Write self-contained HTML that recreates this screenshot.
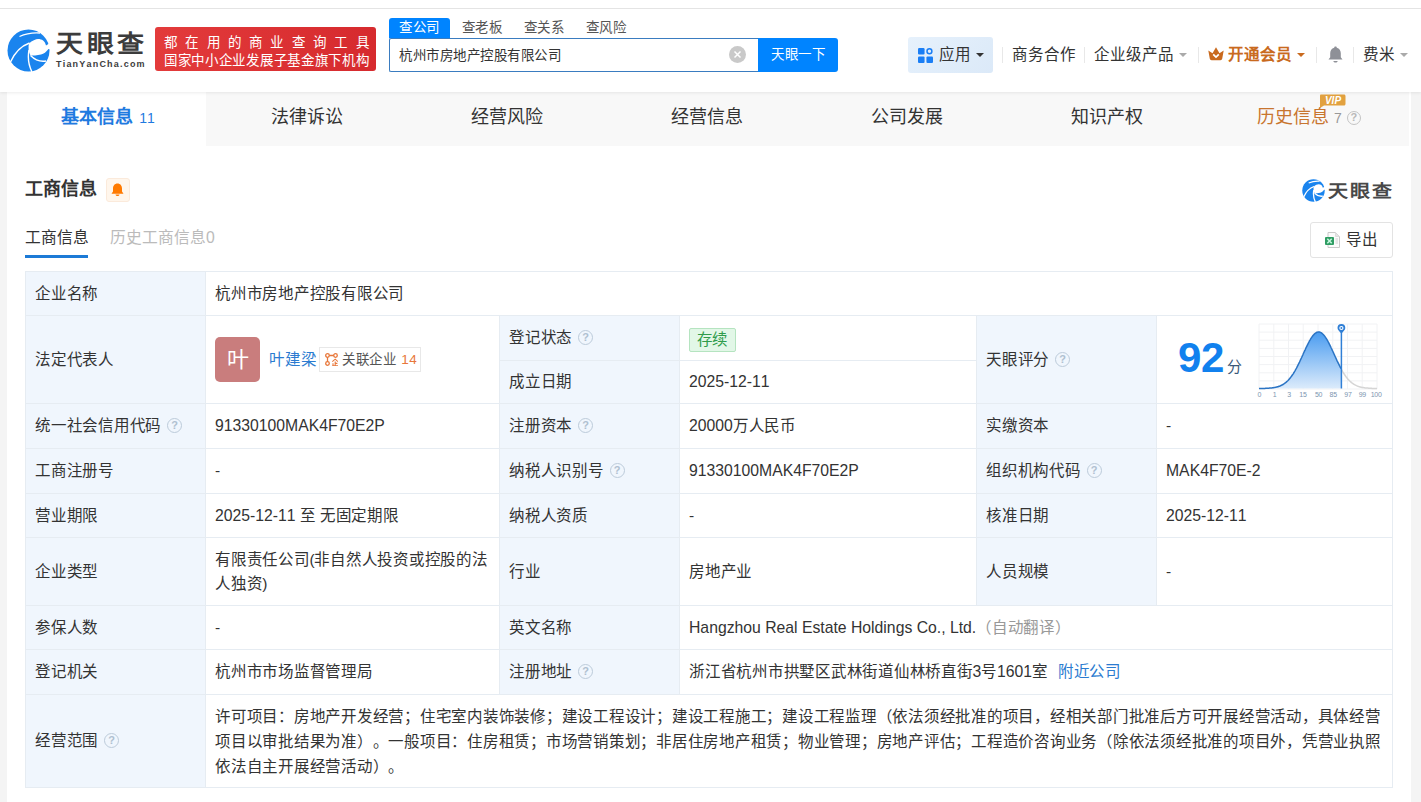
<!DOCTYPE html>
<html lang="zh-CN"><head><meta charset="utf-8">
<style>
*{margin:0;padding:0;box-sizing:border-box}
html,body{text-spacing-trim:space-all;font-kerning:none;width:1421px;height:802px;overflow:hidden;background:#f4f4f4;font-family:"Liberation Sans",sans-serif;color:#333}
.abs{position:absolute}
#hdr{position:absolute;left:0;top:0;width:1421px;height:92px;background:#fff;box-shadow:0 1px 3px rgba(0,0,0,.08);z-index:2}
#topline{position:absolute;left:0;top:8px;width:1421px;height:1px;background:#e4e4e4}
.logoTxt{transform:scaleY(0.9);transform-origin:0 27px;position:absolute;left:56px;top:26px;font-size:27px;font-weight:bold;color:#3c3c3c;letter-spacing:3.5px;line-height:34px;white-space:nowrap}
.logoSub{position:absolute;left:56px;top:58px;font-size:9px;font-weight:bold;color:#3c3c3c;letter-spacing:1.2px;line-height:12px;white-space:nowrap}
.banner{position:absolute;left:155px;top:27px;width:221px;height:44px;border-radius:3px;background:linear-gradient(90deg,#e33b3b,#d62a2e);color:#fff}
.b1{position:absolute;left:9px;top:7px;font-size:13.5px;letter-spacing:8.3px;line-height:18px;white-space:nowrap}
.b2{position:absolute;left:9px;top:25px;font-size:13.5px;letter-spacing:0.7px;line-height:18px;white-space:nowrap}
.stab{position:absolute;top:18px;height:20px;width:62px;font-size:13.5px;letter-spacing:0.5px;line-height:20px;text-align:center;color:#555;white-space:nowrap}
.stab.on{background:#0084ff;color:#fff;border-radius:3px 3px 0 0;width:61px}
.sinput{position:absolute;left:389px;top:38px;width:369px;height:34px;border:1px solid #3a7cc0;border-right:none;border-radius:2px 0 0 2px;background:#fff}
.sinput .t{position:absolute;left:9px;top:8px;letter-spacing:0.5px;font-size:13.5px;line-height:18px;color:#333;white-space:nowrap}
.clr{position:absolute;left:339px;top:7px;width:17px;height:17px;border-radius:50%;background:#c9c9c9}
.sbtn{position:absolute;left:758px;top:38px;width:80px;height:34px;background:#0084ff;border-radius:0 3px 3px 0;color:#fff;font-size:13.5px;letter-spacing:0.5px;padding-left:0px;line-height:34px;text-align:center;white-space:nowrap}
.nav{position:absolute;top:46px;font-size:15.5px;line-height:18px;color:#333;white-space:nowrap}
.sep{position:absolute;top:47px;width:1px;height:16px;background:#e8e8e8}
.caret{position:absolute;width:0;height:0;border-left:4px solid transparent;border-right:4px solid transparent;border-top:4px solid #999}
#card{position:absolute;left:7px;top:92px;width:1404px;height:710px;background:#fff}
#tabs{position:absolute;left:0;top:0;width:1402px;height:54px;background:#f8f8f8}
.tab{position:absolute;top:0;width:200px;height:54px;text-align:center;font-size:18px;line-height:50px;color:#333;white-space:nowrap}
.tab.on{background:#fff;color:#1f7ae0;font-weight:bold;left:0;width:199px}
.c{position:absolute;border-right:1px solid #e6ecf2;border-bottom:1px solid #e6ecf2;background:#fff;display:flex;align-items:center;font-size:15.5px;letter-spacing:-0.25px;color:#333;white-space:nowrap}
.en{letter-spacing:0;font-size:15.75px}
.c.lb{background:#f0f6fd}
.c .in{padding-left:9px;position:relative;top:0px;line-height:20px}
.c .in.fx{display:flex;align-items:center;top:0}
.q{display:inline-block;vertical-align:2px;width:15px;height:15px;border:1.5px solid #bccbda;border-radius:50%;color:#afc0d0;font-size:11px;line-height:12px;text-align:center;margin-left:6px;font-weight:bold;letter-spacing:0}
.ml{white-space:nowrap}
.av{display:inline-block;width:45px;height:45px;border-radius:5px;background:#c97d7d;color:#fff;font-size:22px;line-height:45px;text-align:center;margin-right:9px}
.lk{color:#2b7bd0}
.rel{display:inline-flex;align-items:center;height:25px;border:1px solid #e8e8e8;margin-left:3px;padding:0 3px 0 5px;font-size:13.5px;letter-spacing:0.5px}
.rel svg{margin-right:4px}
.rt{color:#555}
.rn{color:#e8773a;margin-left:5px}
.tag{display:inline-block;vertical-align:middle;position:relative;top:2px;height:24px;line-height:22px;border:1px solid #b5e4c0;background:#e2f7e7;color:#2f9c4b;border-radius:2px;padding:0 6.5px;font-size:15.5px}
.gr{color:#999;margin-left:0px}
.sc{position:absolute;left:21px;top:19px;font-size:42px;font-weight:bold;color:#1181ee;line-height:46px;font-family:"Liberation Sans",sans-serif}
.fen{position:absolute;left:70px;top:42px;font-size:15px;color:#3a5878;line-height:18px}
.chart{position:absolute;left:0;top:0}
</style></head><body>
<div id="hdr">
  <div id="topline"></div>
  <svg class="abs" style="left:7px;top:29px" width="43" height="43" viewBox="0 0 43 43">
<circle cx="21.5" cy="21.5" r="21" fill="#1a84ee"/>
  <path d="M22 14.5 C25 11.5, 29 10, 31 10 C35 10, 38 12, 39 16.5 L43 14 L43 20 L41.5 20 C39 23, 37 25, 34 25.5 C30 26.5, 26 26.5, 23.5 26.5 C21.5 23, 21 18, 22 14.5 Z" fill="#fff"/>
  <path d="M12.5 7.5 C19 4.5, 26 3.5, 33 4" fill="none" stroke="#fff" stroke-width="1.3"/>
  <path d="M3.5 33 C8 23, 14 17, 22.5 14" fill="none" stroke="#fff" stroke-width="1.4"/>
  <path d="M22 21 C20.5 29, 21.5 36, 25 43" fill="none" stroke="#fff" stroke-width="1.4"/>
  <path d="M23.5 26.5 C28 31, 33 33, 39 32" fill="none" stroke="#fff" stroke-width="1.4"/>
  </svg>
  <div class="logoTxt">天眼查</div>
  <div class="logoSub">TianYanCha.com</div>
  <div class="banner"><div class="b1">都在用的商业查询工具</div><div class="b2">国家中小企业发展子基金旗下机构</div></div>
  <div class="stab on" style="left:389px">查公司</div>
  <div class="stab" style="left:451px">查老板</div>
  <div class="stab" style="left:513px">查关系</div>
  <div class="stab" style="left:575px">查风险</div>
  <div class="sinput"><div class="t">杭州市房地产控股有限公司</div>
    <div class="clr"><svg width="17" height="17" viewBox="0 0 17 17"><path d="M5.5 5.5l6 6M11.5 5.5l-6 6" stroke="#fff" stroke-width="1.5"/></svg></div>
  </div>
  <div class="sbtn">天眼一下</div>
  <div class="abs" style="left:908px;top:37px;width:85px;height:36px;border-radius:3px;background:linear-gradient(135deg,#e6f1fc,#dbe9f8)"></div>
  <svg class="abs" style="left:918px;top:47.5px" width="15" height="15" viewBox="0 0 16 16">
    <rect x="0" y="0" width="7" height="7" rx="1.2" fill="#1a7ef5"/>
    <circle cx="12.2" cy="3.5" r="2.6" fill="none" stroke="#1a7ef5" stroke-width="1.6"/>
    <rect x="0" y="9" width="7" height="7" rx="1.2" fill="#1a7ef5"/>
    <rect x="9" y="9" width="7" height="7" rx="1.2" fill="#1a7ef5"/>
  </svg>
  <div class="nav" style="left:939px">应用</div>
  <div class="caret" style="left:976px;top:53px;border-top-color:#333"></div>
  <div class="sep" style="left:1002px"></div>
  <div class="nav" style="left:1012px">商务合作</div>
  <div class="sep" style="left:1084px"></div>
  <div class="nav" style="left:1094px">企业级产品</div>
  <div class="caret" style="left:1179px;top:53px;border-top-color:#aaa"></div>
  <div class="sep" style="left:1198px"></div>
  <svg class="abs" style="left:1208px;top:47px" width="16" height="14" viewBox="0 0 16 14">
    <path d="M0.3 3.5 L4.5 6.2 L8 0.3 L11.5 6.2 L15.7 3.5 L14.2 11.8 Q13.9 13.2 12.5 13.2 L3.5 13.2 Q2.1 13.2 1.8 11.8 Z" fill="#c96a1e"/>
    <path d="M5.2 7.3 L8 10.1 L10.8 7.3" fill="none" stroke="#fff" stroke-width="1.7"/>
  </svg>
  <div class="nav" style="left:1228px;color:#c96a1e;font-weight:bold">开通会员</div>
  <div class="caret" style="left:1297px;top:53px;border-top-color:#c96a1e"></div>
  <div class="sep" style="left:1316px"></div>
  <svg class="abs" style="left:1328px;top:46px" width="15" height="17" viewBox="0 0 15 17">
    <path d="M7.5 0.5c.8 0 1.3.5 1.3 1.2 2.6.6 4 2.8 4 5.6v4l1.7 2.2H0.5l1.7-2.2v-4c0-2.8 1.4-5 4-5.6 0-.7.5-1.2 1.3-1.2z" fill="#8e9097"/>
    <path d="M5.3 15h4.4c-.3 1-1.2 1.6-2.2 1.6S5.6 16 5.3 15z" fill="#8e9097"/>
  </svg>
  <div class="sep" style="left:1353px"></div>
  <div class="nav" style="left:1363px">费米</div>
  <div class="caret" style="left:1400px;top:53px;border-top-color:#aaa"></div>
</div>

<div id="card">
  <div id="tabs">
    <div class="tab on" style="padding-left:3px">基本信息<span style="font-size:14px;font-weight:normal;margin-left:6px">11</span></div>
    <div class="tab" style="left:200px">法律诉讼</div>
    <div class="tab" style="left:400px">经营风险</div>
    <div class="tab" style="left:600px">经营信息</div>
    <div class="tab" style="left:800px">公司发展</div>
    <div class="tab" style="left:1000px">知识产权</div>
    <div class="tab" style="left:1202px;color:#c8752f">历史信息<span style="font-size:14px;color:#999;margin-left:5px">7</span><span class="q" style="margin-left:5px;vertical-align:2px;width:14px;height:14px;line-height:11px;border-color:#c4c4c4;color:#b8b8b8">?</span></div>
    <svg class="abs" style="left:1312px;top:2px" width="27" height="14" viewBox="0 0 27 14">
      <path d="M2 0.5h23c.8 0 1.5.7 1.5 1.5v8c0 .8-.7 1.5-1.5 1.5H5L1 14V2C1 1.2 1.2 0.5 2 0.5z" fill="#e2a13f"/>
      <text x="14" y="10" text-anchor="middle" font-size="10" font-weight="bold" font-style="italic" fill="#fff" font-family="Liberation Sans, sans-serif">VIP</text>
    </svg>
  </div>
</div>

<div class="abs" style="left:25px;top:177px;font-size:18px;font-weight:bold;color:#333;line-height:24px;white-space:nowrap">工商信息</div>
<div class="abs" style="left:106px;top:178px;width:24px;height:24px;background:#fff6ec;border:1px solid #fbeadb;border-radius:3px"></div>
<svg class="abs" style="left:111px;top:183px" width="13" height="14" viewBox="0 0 13 14">
  <path d="M6.5 0.5c2.8 0 4.5 2.2 4.5 5v3l1.5 2.3H0.5L2 8.5v-3c0-2.8 1.7-5 4.5-5z" fill="#ff7a00"/>
  <path d="M4.5 11.5h4c-.3 1-1 1.6-2 1.6s-1.7-.6-2-1.6z" fill="#ff7a00"/>
</svg>
<svg class="abs" style="left:1302px;top:179px" width="23" height="23" viewBox="0 0 43 43">
<circle cx="21.5" cy="21.5" r="21" fill="#1a84ee"/>
  <path d="M22 14.5 C25 11.5, 29 10, 31 10 C35 10, 38 12, 39 16.5 L43 14 L43 20 L41.5 20 C39 23, 37 25, 34 25.5 C30 26.5, 26 26.5, 23.5 26.5 C21.5 23, 21 18, 22 14.5 Z" fill="#fff"/>
  <path d="M12.5 7.5 C19 4.5, 26 3.5, 33 4" fill="none" stroke="#fff" stroke-width="2.4"/>
  <path d="M3.5 33 C8 23, 14 17, 22.5 14" fill="none" stroke="#fff" stroke-width="2.4"/>
  <path d="M22 21 C20.5 29, 21.5 36, 25 43" fill="none" stroke="#fff" stroke-width="2.4"/>
  <path d="M23.5 26.5 C28 31, 33 33, 39 32" fill="none" stroke="#fff" stroke-width="2.4"/>
</svg>
<div class="abs" style="left:1328px;top:178px;font-size:20px;letter-spacing:2px;font-weight:bold;color:#484848;line-height:24px;white-space:nowrap;transform:scaleY(0.88);transform-origin:0 21px">天眼查</div>

<div class="abs" style="left:25px;top:228px;font-size:15.75px;color:#333;line-height:20px;white-space:nowrap">工商信息</div>
<div class="abs" style="left:25px;top:255px;width:63px;height:3px;background:#1c7ad6"></div>
<div class="abs" style="left:110px;top:228px;font-size:15.75px;color:#bbb;line-height:20px;white-space:nowrap">历史工商信息0</div>

<div class="abs" style="left:1310px;top:222px;width:83px;height:36px;border:1px solid #e3e3e3;border-radius:3px;background:#fff"></div>
<svg class="abs" style="left:1325px;top:232px" width="15" height="16" viewBox="0 0 15 16">
  <path d="M3 0.5h7.5l4 4v11H3z" fill="#fbfbfb" stroke="#c9c9c9" stroke-width="1"/>
  <path d="M10.5 0.5v4h4" fill="#e5e5e5" stroke="#dcdcdc" stroke-width="1"/>
  <rect x="0" y="5" width="9" height="8" rx="1" fill="#2f9d63"/>
  <path d="M2.3 6.8l4.4 4.4M6.7 6.8l-4.4 4.4" stroke="#c8f7e0" stroke-width="1.5"/>
  <path d="M10.5 7h2.5M10.5 9h2.5M10.5 11h2.5" stroke="#cfcfcf" stroke-width="1"/>
</svg>
<div class="abs" style="left:1346px;top:230px;font-size:15.5px;color:#333;line-height:20px;white-space:nowrap">导出</div>

<div class="abs" style="left:25px;top:271px;width:1368px;height:517px;border-left:1px solid #e6ecf2;border-top:1px solid #e6ecf2"></div>
<div class="c lb" style="left:26px;top:272px;width:180px;height:44px;"><div class="in">企业名称</div></div>
<div class="c" style="left:206px;top:272px;width:1187px;height:44px;"><div class="in">杭州市房地产控股有限公司</div></div>
<div class="c lb" style="left:26px;top:316px;width:180px;height:88px;"><div class="in">法定代表人</div></div>
<div class="c" style="left:206px;top:316px;width:294px;height:88px;"><div class="in fx"><span class="av">叶</span><span class="lk">叶建梁</span><span class="rel"><svg width="13" height="13" viewBox="0 0 13 13" fill="none" stroke="#e8773a" stroke-width="1.3"><circle cx="2.5" cy="2.5" r="1.8"/><circle cx="10.5" cy="2.5" r="1.8"/><circle cx="2.5" cy="10.5" r="1.8"/><path d="M4.3 2.5h4.4M2.5 4.3v4.4"/><path d="M7.3 8.6L10.2 6.2L13 8.6M10.2 8.5v4.3M8 10.2v2.6M7.2 12.8h6M10.2 10.4h2.2" stroke-width="1.1"/></svg><span class="rt">关联企业</span><span class="rn">14</span></span></div></div>
<div class="c lb" style="left:500px;top:316px;width:180px;height:45px;"><div class="in">登记状态<span class="q">?</span></div></div>
<div class="c" style="left:680px;top:316px;width:297px;height:45px;"><div class="in"><span class="tag">存续</span></div></div>
<div class="c lb" style="left:500px;top:361px;width:180px;height:43px;"><div class="in">成立日期</div></div>
<div class="c" style="left:680px;top:361px;width:297px;height:43px;"><div class="in"><span class="en">2025-12-11</span></div></div>
<div class="c lb" style="left:977px;top:316px;width:180px;height:88px;"><div class="in">天眼评分<span class="q">?</span></div></div>
<div class="c" style="left:1157px;top:316px;width:236px;height:88px;"><span class="sc">92</span><span class="fen">分</span><svg class="chart" width="236" height="88" viewBox="0 0 236 88">
<defs><linearGradient id="g1" x1="0" y1="0" x2="0" y2="1"><stop offset="0" stop-color="#4a9cf0"/><stop offset="1" stop-color="#dcebfb"/></linearGradient></defs>
<g stroke="#f1f2f4" stroke-width="1"><line x1="102.0" y1="8" x2="102.0" y2="73"/><line x1="116.8" y1="8" x2="116.8" y2="73"/><line x1="131.5" y1="8" x2="131.5" y2="73"/><line x1="146.2" y1="8" x2="146.2" y2="73"/><line x1="161.0" y1="8" x2="161.0" y2="73"/><line x1="175.8" y1="8" x2="175.8" y2="73"/><line x1="190.5" y1="8" x2="190.5" y2="73"/><line x1="205.2" y1="8" x2="205.2" y2="73"/><line x1="220.0" y1="8" x2="220.0" y2="73"/><line x1="102" y1="8.0" x2="220" y2="8.0"/><line x1="102" y1="16.1" x2="220" y2="16.1"/><line x1="102" y1="24.2" x2="220" y2="24.2"/><line x1="102" y1="32.4" x2="220" y2="32.4"/><line x1="102" y1="40.5" x2="220" y2="40.5"/><line x1="102" y1="48.6" x2="220" y2="48.6"/><line x1="102" y1="56.8" x2="220" y2="56.8"/><line x1="102" y1="64.9" x2="220" y2="64.9"/><line x1="102" y1="73.0" x2="220" y2="73.0"/></g>
<path d="M102.0 72.5 L102.5 72.5 L103.0 72.5 L103.5 72.4 L104.0 72.4 L104.5 72.4 L105.0 72.4 L105.5 72.4 L106.0 72.4 L106.5 72.4 L107.0 72.4 L107.5 72.4 L108.0 72.4 L108.5 72.3 L109.0 72.3 L109.5 72.3 L110.0 72.3 L110.5 72.3 L111.0 72.2 L111.5 72.2 L112.0 72.2 L112.5 72.1 L113.0 72.1 L113.5 72.0 L114.0 72.0 L114.5 71.9 L115.0 71.9 L115.5 71.8 L116.0 71.8 L116.5 71.7 L117.0 71.6 L117.5 71.5 L118.0 71.4 L118.5 71.3 L119.0 71.2 L119.5 71.1 L120.0 71.0 L120.5 70.8 L121.0 70.7 L121.5 70.5 L122.0 70.3 L122.5 70.2 L123.0 70.0 L123.5 69.7 L124.0 69.5 L124.5 69.3 L125.0 69.0 L125.5 68.7 L126.0 68.5 L126.5 68.1 L127.0 67.8 L127.5 67.5 L128.0 67.1 L128.5 66.7 L129.0 66.3 L129.5 65.9 L130.0 65.4 L130.5 65.0 L131.0 64.5 L131.5 63.9 L132.0 63.4 L132.5 62.8 L133.0 62.2 L133.5 61.6 L134.0 60.9 L134.5 60.2 L135.0 59.5 L135.5 58.8 L136.0 58.1 L136.5 57.3 L137.0 56.5 L137.5 55.6 L138.0 54.8 L138.5 53.9 L139.0 53.0 L139.5 52.1 L140.0 51.1 L140.5 50.1 L141.0 49.1 L141.5 48.1 L142.0 47.1 L142.5 46.1 L143.0 45.0 L143.5 43.9 L144.0 42.8 L144.5 41.8 L145.0 40.7 L145.5 39.6 L146.0 38.5 L146.5 37.3 L147.0 36.2 L147.5 35.1 L148.0 34.1 L148.5 33.0 L149.0 31.9 L149.5 30.8 L150.0 29.8 L150.5 28.8 L151.0 27.8 L151.5 26.8 L152.0 25.9 L152.5 24.9 L153.0 24.1 L153.5 23.2 L154.0 22.4 L154.5 21.6 L155.0 20.9 L155.5 20.2 L156.0 19.6 L156.5 19.0 L157.0 18.4 L157.5 17.9 L158.0 17.5 L158.5 17.1 L159.0 16.8 L159.5 16.5 L160.0 16.3 L160.5 16.1 L161.0 16.0 L161.5 16.0 L162.0 16.0 L162.5 16.1 L163.0 16.2 L163.5 16.4 L164.0 16.7 L164.5 17.0 L165.0 17.3 L165.5 17.8 L166.0 18.2 L166.5 18.8 L167.0 19.3 L167.5 19.9 L168.0 20.6 L168.5 21.3 L169.0 22.1 L169.5 22.9 L170.0 23.7 L170.5 24.6 L171.0 25.5 L171.5 26.4 L172.0 27.4 L172.5 28.4 L173.0 29.4 L173.5 30.4 L174.0 31.5 L174.5 32.5 L175.0 33.6 L175.5 34.7 L176.0 35.8 L176.5 36.9 L177.0 38.0 L177.5 39.1 L178.0 40.2 L178.5 41.3 L179.0 42.4 L179.5 43.5 L180.0 44.6 L180.5 45.6 L181.0 46.7 L181.5 47.7 L182.0 48.7 L182.5 49.7 L183.0 50.7 L183.5 51.7 L184.0 52.6 L184.4 72.5 L102.0 72.5 Z" fill="url(#g1)"/>
<path d="M102.0 72.5 L102.5 72.5 L103.0 72.5 L103.5 72.4 L104.0 72.4 L104.5 72.4 L105.0 72.4 L105.5 72.4 L106.0 72.4 L106.5 72.4 L107.0 72.4 L107.5 72.4 L108.0 72.4 L108.5 72.3 L109.0 72.3 L109.5 72.3 L110.0 72.3 L110.5 72.3 L111.0 72.2 L111.5 72.2 L112.0 72.2 L112.5 72.1 L113.0 72.1 L113.5 72.0 L114.0 72.0 L114.5 71.9 L115.0 71.9 L115.5 71.8 L116.0 71.8 L116.5 71.7 L117.0 71.6 L117.5 71.5 L118.0 71.4 L118.5 71.3 L119.0 71.2 L119.5 71.1 L120.0 71.0 L120.5 70.8 L121.0 70.7 L121.5 70.5 L122.0 70.3 L122.5 70.2 L123.0 70.0 L123.5 69.7 L124.0 69.5 L124.5 69.3 L125.0 69.0 L125.5 68.7 L126.0 68.5 L126.5 68.1 L127.0 67.8 L127.5 67.5 L128.0 67.1 L128.5 66.7 L129.0 66.3 L129.5 65.9 L130.0 65.4 L130.5 65.0 L131.0 64.5 L131.5 63.9 L132.0 63.4 L132.5 62.8 L133.0 62.2 L133.5 61.6 L134.0 60.9 L134.5 60.2 L135.0 59.5 L135.5 58.8 L136.0 58.1 L136.5 57.3 L137.0 56.5 L137.5 55.6 L138.0 54.8 L138.5 53.9 L139.0 53.0 L139.5 52.1 L140.0 51.1 L140.5 50.1 L141.0 49.1 L141.5 48.1 L142.0 47.1 L142.5 46.1 L143.0 45.0 L143.5 43.9 L144.0 42.8 L144.5 41.8 L145.0 40.7 L145.5 39.6 L146.0 38.5 L146.5 37.3 L147.0 36.2 L147.5 35.1 L148.0 34.1 L148.5 33.0 L149.0 31.9 L149.5 30.8 L150.0 29.8 L150.5 28.8 L151.0 27.8 L151.5 26.8 L152.0 25.9 L152.5 24.9 L153.0 24.1 L153.5 23.2 L154.0 22.4 L154.5 21.6 L155.0 20.9 L155.5 20.2 L156.0 19.6 L156.5 19.0 L157.0 18.4 L157.5 17.9 L158.0 17.5 L158.5 17.1 L159.0 16.8 L159.5 16.5 L160.0 16.3 L160.5 16.1 L161.0 16.0 L161.5 16.0 L162.0 16.0 L162.5 16.1 L163.0 16.2 L163.5 16.4 L164.0 16.7 L164.5 17.0 L165.0 17.3 L165.5 17.8 L166.0 18.2 L166.5 18.8 L167.0 19.3 L167.5 19.9 L168.0 20.6 L168.5 21.3 L169.0 22.1 L169.5 22.9 L170.0 23.7 L170.5 24.6 L171.0 25.5 L171.5 26.4 L172.0 27.4 L172.5 28.4 L173.0 29.4 L173.5 30.4 L174.0 31.5 L174.5 32.5 L175.0 33.6 L175.5 34.7 L176.0 35.8 L176.5 36.9 L177.0 38.0 L177.5 39.1 L178.0 40.2 L178.5 41.3 L179.0 42.4 L179.5 43.5 L180.0 44.6 L180.5 45.6 L181.0 46.7 L181.5 47.7 L182.0 48.7 L182.5 49.7 L183.0 50.7 L183.5 51.7 L184.0 52.6" fill="none" stroke="#2b74c4" stroke-width="1.5"/>
<path d="M184.5 53.5 L185.0 54.4 L185.5 55.3 L186.0 56.1 L186.5 57.0 L187.0 57.7 L187.5 58.5 L188.0 59.3 L188.5 60.0 L189.0 60.7 L189.5 61.3 L190.0 62.0 L190.5 62.6 L191.0 63.2 L191.5 63.7 L192.0 64.2 L192.5 64.8 L193.0 65.2 L193.5 65.7 L194.0 66.1 L194.5 66.6 L195.0 67.0 L195.5 67.3 L196.0 67.7 L196.5 68.0 L197.0 68.3 L197.5 68.6 L198.0 68.9 L198.5 69.2 L199.0 69.4 L199.5 69.7 L200.0 69.9 L200.5 70.1 L201.0 70.3 L201.5 70.4 L202.0 70.6 L202.5 70.8 L203.0 70.9 L203.5 71.0 L204.0 71.2 L204.5 71.3 L205.0 71.4 L205.5 71.5 L206.0 71.6 L206.5 71.6 L207.0 71.7 L207.5 71.8 L208.0 71.9 L208.5 71.9 L209.0 72.0 L209.5 72.0 L210.0 72.1 L210.5 72.1 L211.0 72.1 L211.5 72.2 L212.0 72.2 L212.5 72.2 L213.0 72.3 L213.5 72.3 L214.0 72.3 L214.5 72.3 L215.0 72.4 L215.5 72.4 L216.0 72.4 L216.5 72.4 L217.0 72.4 L217.5 72.4 L218.0 72.4 L218.5 72.4 L219.0 72.4 L219.5 72.4 L220.0 72.5" fill="none" stroke="#d5d5d5" stroke-width="1.5"/>
<line x1="184.4" y1="15" x2="184.4" y2="72.5" stroke="#2f7fd6" stroke-width="1.5"/>
<path d="M180.5 12 a3.9 3.9 0 1 1 7.8 0 c0 2 -2.3 3.6 -3.9 5.6 c-1.6 -2 -3.9 -3.6 -3.9 -5.6z" fill="#2f7fd6"/>
<circle cx="184.4" cy="12" r="2.1" fill="#fff"/>
<circle cx="184.4" cy="12" r="1" fill="#2f7fd6"/>
<g font-size="7" fill="#7d95b0" font-family="Liberation Sans, sans-serif"><text x="102.4" y="81" text-anchor="middle">0</text><text x="117.5" y="81" text-anchor="middle">1</text><text x="132.2" y="81" text-anchor="middle">3</text><text x="146.0" y="81" text-anchor="middle">15</text><text x="161.6" y="81" text-anchor="middle">50</text><text x="176.2" y="81" text-anchor="middle">85</text><text x="191.0" y="81" text-anchor="middle">97</text><text x="205.3" y="81" text-anchor="middle">99</text><text x="219.2" y="81" text-anchor="middle">100</text></g>
</svg></div>
<div class="c lb" style="left:26px;top:404px;width:180px;height:45px;"><div class="in">统一社会信用代码<span class="q">?</span></div></div>
<div class="c" style="left:206px;top:404px;width:294px;height:45px;"><div class="in"><span class="en">91330100MAK4F70E2P</span></div></div>
<div class="c lb" style="left:500px;top:404px;width:180px;height:45px;"><div class="in">注册资本<span class="q">?</span></div></div>
<div class="c" style="left:680px;top:404px;width:297px;height:45px;"><div class="in"><span class="en">20000</span>万人民币</div></div>
<div class="c lb" style="left:977px;top:404px;width:180px;height:45px;"><div class="in">实缴资本</div></div>
<div class="c" style="left:1157px;top:404px;width:236px;height:45px;"><div class="in">-</div></div>
<div class="c lb" style="left:26px;top:449px;width:180px;height:45px;"><div class="in">工商注册号</div></div>
<div class="c" style="left:206px;top:449px;width:294px;height:45px;"><div class="in">-</div></div>
<div class="c lb" style="left:500px;top:449px;width:180px;height:45px;"><div class="in">纳税人识别号<span class="q">?</span></div></div>
<div class="c" style="left:680px;top:449px;width:297px;height:45px;"><div class="in"><span class="en">91330100MAK4F70E2P</span></div></div>
<div class="c lb" style="left:977px;top:449px;width:180px;height:45px;"><div class="in">组织机构代码<span class="q">?</span></div></div>
<div class="c" style="left:1157px;top:449px;width:236px;height:45px;"><div class="in"><span class="en">MAK4F70E-2</span></div></div>
<div class="c lb" style="left:26px;top:494px;width:180px;height:44px;"><div class="in">营业期限</div></div>
<div class="c" style="left:206px;top:494px;width:294px;height:44px;"><div class="in"><span class="en">2025-12-11 </span>至 无固定期限</div></div>
<div class="c lb" style="left:500px;top:494px;width:180px;height:44px;"><div class="in">纳税人资质</div></div>
<div class="c" style="left:680px;top:494px;width:297px;height:44px;"><div class="in">-</div></div>
<div class="c lb" style="left:977px;top:494px;width:180px;height:44px;"><div class="in">核准日期</div></div>
<div class="c" style="left:1157px;top:494px;width:236px;height:44px;"><div class="in"><span class="en">2025-12-11</span></div></div>
<div class="c lb" style="left:26px;top:538px;width:180px;height:68px;"><div class="in">企业类型</div></div>
<div class="c" style="left:206px;top:538px;width:294px;height:68px;"><div class="in"><div class="ml" style="line-height:23.5px">有限责任公司(非自然人投资或控股的法<br>人独资)</div></div></div>
<div class="c lb" style="left:500px;top:538px;width:180px;height:68px;"><div class="in">行业</div></div>
<div class="c" style="left:680px;top:538px;width:297px;height:68px;"><div class="in">房地产业</div></div>
<div class="c lb" style="left:977px;top:538px;width:180px;height:68px;"><div class="in">人员规模</div></div>
<div class="c" style="left:1157px;top:538px;width:236px;height:68px;"><div class="in">-</div></div>
<div class="c lb" style="left:26px;top:606px;width:180px;height:44px;"><div class="in">参保人数</div></div>
<div class="c" style="left:206px;top:606px;width:294px;height:44px;"><div class="in">-</div></div>
<div class="c lb" style="left:500px;top:606px;width:180px;height:44px;"><div class="in">英文名称</div></div>
<div class="c" style="left:680px;top:606px;width:713px;height:44px;"><div class="in"><span class="en">Hangzhou Real Estate Holdings Co., Ltd.</span><span class="gr">（自动翻译）</span></div></div>
<div class="c lb" style="left:26px;top:650px;width:180px;height:45px;"><div class="in">登记机关</div></div>
<div class="c" style="left:206px;top:650px;width:294px;height:45px;"><div class="in">杭州市市场监督管理局</div></div>
<div class="c lb" style="left:500px;top:650px;width:180px;height:45px;"><div class="in">注册地址<span class="q">?</span></div></div>
<div class="c" style="left:680px;top:650px;width:713px;height:45px;"><div class="in">浙江省杭州市拱墅区武林街道仙林桥直街<span class="en">3</span>号<span class="en">1601</span>室<span class="lk" style="margin-left:10px">附近公司</span></div></div>
<div class="c lb" style="left:26px;top:695px;width:180px;height:93px;"><div class="in">经营范围<span class="q">?</span></div></div>
<div class="c" style="left:206px;top:695px;width:1187px;height:93px;"><div class="in"><div class="ml" style="line-height:25px">许可项目：房地产开发经营；住宅室内装饰装修；建设工程设计；建设工程施工；建设工程监理（依法须经批准的项目，经相关部门批准后方可开展经营活动，具体经营<br>项目以审批结果为准）。一般项目：住房租赁；市场营销策划；非居住房地产租赁；物业管理；房地产评估；工程造价咨询业务（除依法须经批准的项目外，凭营业执照<br>依法自主开展经营活动）。</div></div></div>
</body></html>
